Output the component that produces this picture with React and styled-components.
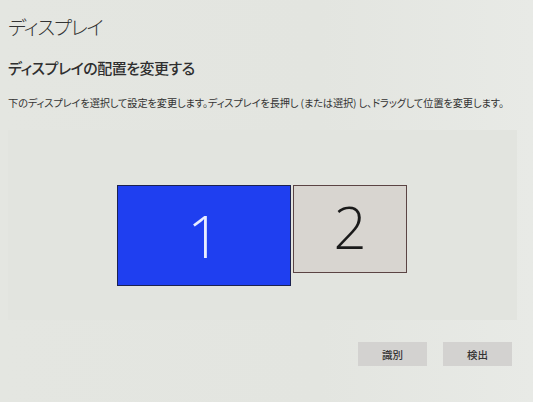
import React from "react";
import styled, { createGlobalStyle } from "styled-components";

const Global = createGlobalStyle`
  html, body { margin: 0; padding: 0; background: #e5e7e2; }
  #root { width: 533px; height: 402px; }
`;

const Page = styled.div`
  box-sizing: border-box;
  width: 533px;
  height: 402px;
  overflow: hidden;
  background: linear-gradient(90deg, #e4e6e1 0%, #e3e5e0 60%, #e8eae6 100%);
  padding: 12px 0 0 8px;
  display: flex;
  flex-direction: column;
  font-family: "Noto Sans CJK JP", "Noto Sans", sans-serif;
  font-feature-settings: "palt";
  color: #2e2e2e;
`;

const Title = styled.h1`
  margin: 0;
  font-size: 19.5px;
  font-weight: 300;
  line-height: 30px;
  letter-spacing: -1.2px;
  color: #333;
`;

const Subtitle = styled.h2`
  margin: 15px 0 0;
  font-size: 15px;
  font-weight: 500;
  line-height: 22px;
  letter-spacing: -0.5px;
  color: #2f2f2f;
`;

const Desc = styled.p`
  margin: 17px 0 0;
  font-size: 10.2px;
  line-height: 14px;
  font-weight: 400;
  letter-spacing: -0.1px;
  color: #333;
  white-space: nowrap;
`;

const Arrange = styled.div`
  margin: 20px 16px 0 0;
  height: 190px;
  background: #e2e4df;
  display: flex;
  justify-content: flex-start;
  align-items: flex-start;
  padding: 55px 0 0 109px;
  box-sizing: border-box;
  gap: 2px;
`;

const Monitor = styled.div`
  box-sizing: border-box;
  width: ${(p) => p.w}px;
  height: ${(p) => p.h}px;
  background: ${(p) => (p.active ? "#1f3ff0" : "#d8d5d0")};
  border: 1.5px solid ${(p) => (p.active ? "#1c2250" : "#5b4444")};
  display: flex;
  align-items: center;
  justify-content: center;
  font-family: "Open Sans", "Noto Sans", sans-serif;
  font-weight: 300;
  font-size: 58px;
  line-height: 1;
  color: ${(p) => (p.active ? "#e8ecff" : "#1a1a1a")};
  padding-bottom: ${(p) => (p.active ? 0 : 4)}px;
`;

const Buttons = styled.div`
  display: flex;
  justify-content: flex-end;
  gap: 16px;
  margin: 22px 21px 0 0;
`;

const Button = styled.button`
  width: 69px;
  height: 24px;
  border: none;
  background: #d3d2d0;
  font-family: "Noto Sans CJK JP", sans-serif;
  font-size: 10.5px;
  font-weight: 500;
  color: #333;
  padding: 0;
`;

export default function App() {
  return (
    <>
      <Global />
      <Page>
        <Title>ディスプレイ</Title>
        <Subtitle>ディスプレイの配置を変更する</Subtitle>
        <Desc>
          下のディスプレイを選択して設定を変更します。ディスプレイを長押し (または選択) し、ドラッグして位置を変更します。
        </Desc>
        <Arrange>
          <Monitor active w={174} h={101}>1</Monitor>
          <Monitor w={114} h={88}>2</Monitor>
        </Arrange>
        <Buttons>
          <Button>識別</Button>
          <Button>検出</Button>
        </Buttons>
      </Page>
    </>
  );
}
